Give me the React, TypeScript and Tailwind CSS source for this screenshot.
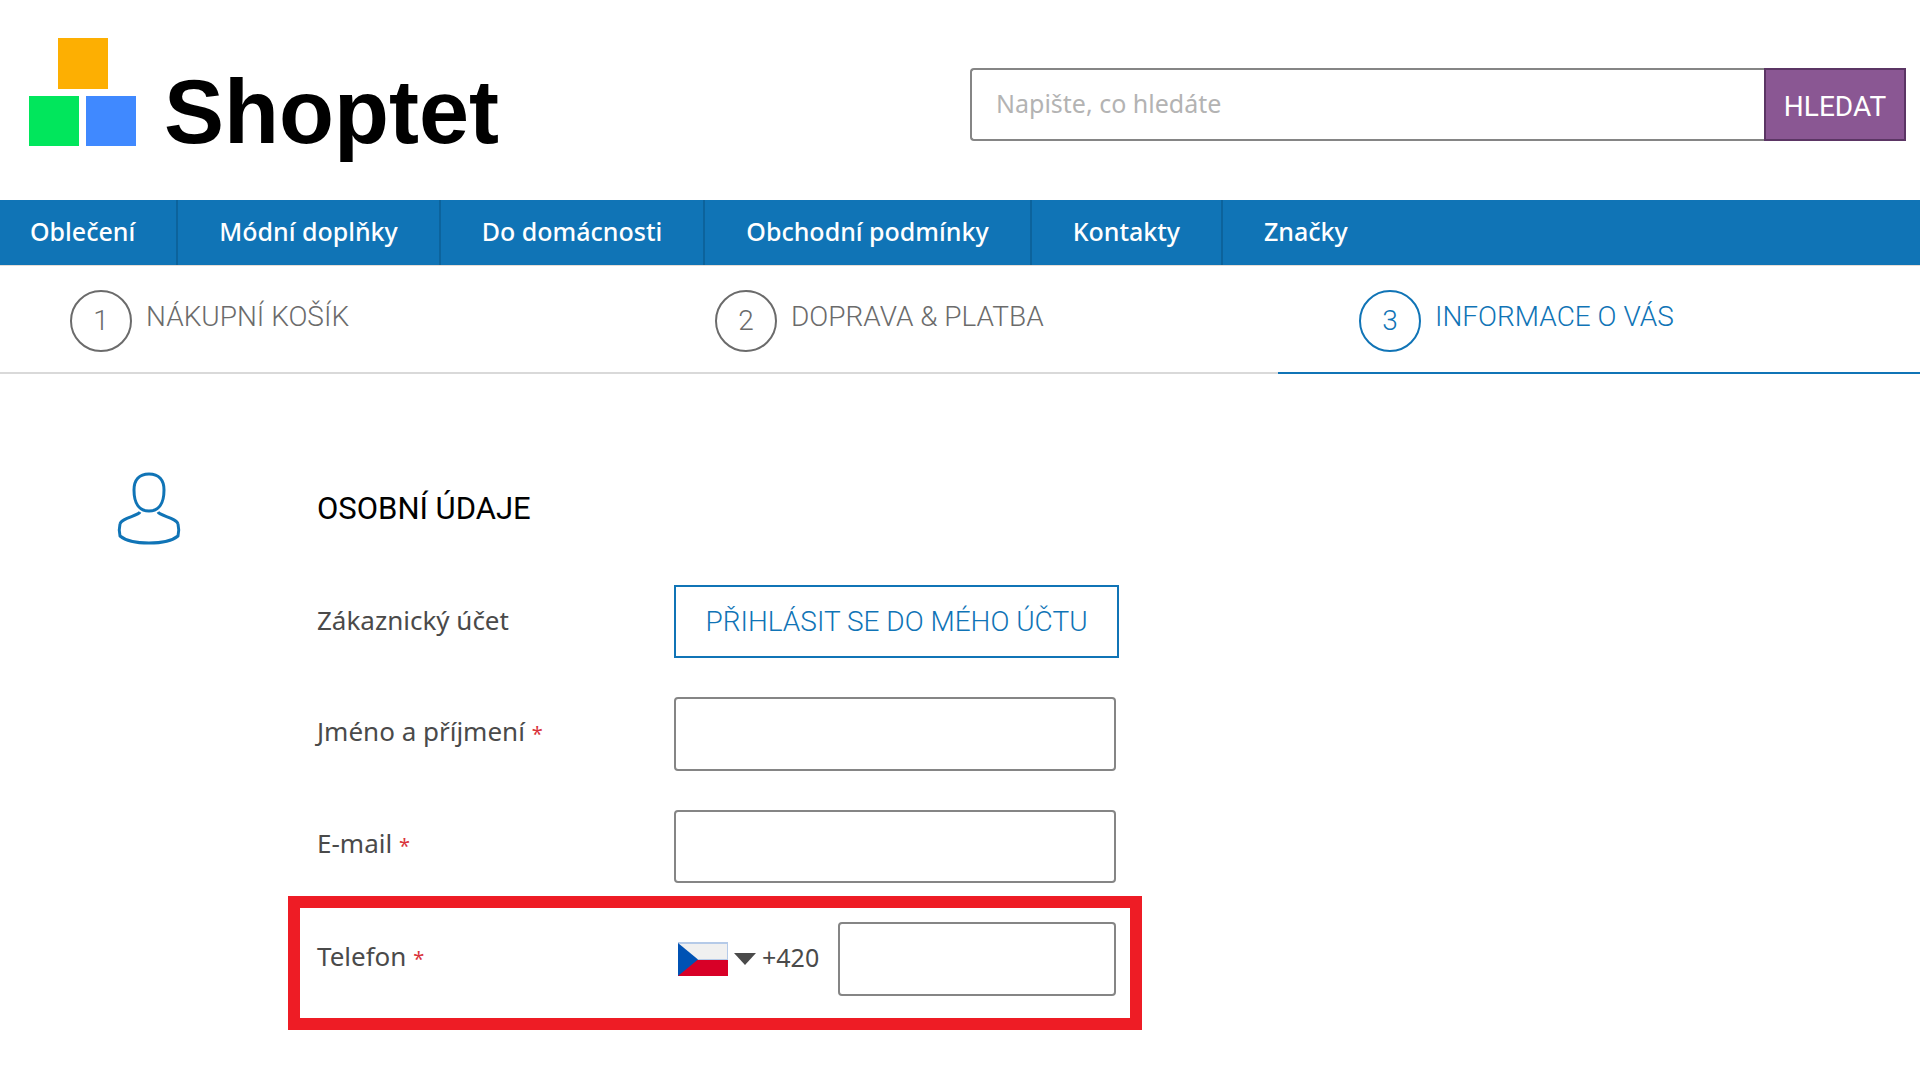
import clsx from 'clsx'

const navItems = [
  { label: 'Oblečení', href: '#obleceni' },
  { label: 'Módní doplňky', href: '#modni-doplnky' },
  { label: 'Do domácnosti', href: '#do-domacnosti' },
  { label: 'Obchodní podmínky', href: '#obchodni-podminky' },
  { label: 'Kontakty', href: '#kontakty' },
  { label: 'Značky', href: '#znacky' },
]

const steps = [
  { label: 'NÁKUPNÍ KOŠÍK', active: false },
  { label: 'DOPRAVA & PLATBA', active: false },
  { label: 'INFORMACE O VÁS', active: true },
]

const inputClass = 'rounded-[4px] border-2 border-[#858585] bg-white px-4 outline-none'

function Logo() {
  return (
    <a href="#" className="flex items-start gap-7">
      <svg width="107" height="108" viewBox="0 0 107 108" aria-hidden="true">
        <rect x="29" y="0" width="50" height="51" fill="#fdaf02" />
        <rect x="0" y="58" width="50" height="50" fill="#01e65c" />
        <rect x="57" y="58" width="50" height="50" fill="#4089ff" />
      </svg>
      <span className="pt-[23px] text-[90px] leading-[102px] font-bold text-black font-['Liberation_Sans',sans-serif]">
        Shoptet
      </span>
    </a>
  )
}

function UserIcon() {
  return (
    <svg
      width="66"
      height="76"
      viewBox="0 0 66 76"
      fill="none"
      stroke="#1074b6"
      strokeWidth="3"
      aria-hidden="true"
    >
      <path d="M33 3C23 3 18 9 18 19C18 32 23 40 33 40C43 40 48 32 48 19C48 9 43 3 33 3Z" />
      <path d="M24 41C22 45 5 47 4 53C3 57 3 61 4 65C10 70 22 72 33 72C44 72 56 70 62 65C63 61 63 57 62 53C61 47 44 45 42 41" />
    </svg>
  )
}

function Flag() {
  return (
    <svg width="50" height="34" viewBox="0 0 50 34" aria-hidden="true">
      <rect width="50" height="34" fill="#b5cae8" />
      <rect y="2" width="49" height="15" fill="#f0f0f0" />
      <rect y="18" width="50" height="16" fill="#d80027" />
      <path d="M0 1L20 17.5L0 34Z" fill="#0052b4" />
    </svg>
  )
}

function FieldLabel({ id, text }: { id: string; text: string }) {
  return (
    <label htmlFor={id} className="w-[357px] shrink-0 pb-1 text-[26px]">
      {text} <span className="text-[20px] text-[#d9333b]">*</span>
    </label>
  )
}

export default function App() {
  return (
    <div className="min-h-screen overflow-x-hidden bg-white text-[25px] leading-[38px] text-[#4a4a4a] font-['Noto_Sans',sans-serif]">
      <header className="flex h-[200px] items-start justify-between pr-[14px] pl-[29px]">
        <div className="pt-[38px]">
          <Logo />
        </div>
        <form className="mt-[68px] flex h-[73px] w-[936px]" onSubmit={(e) => e.preventDefault()}>
          <input
            type="search"
            aria-label="Hledat"
            placeholder="Napište, co hledáte"
            className="min-w-0 grow rounded-l-[4px] border-2 border-r-0 border-[#858585] px-6 pb-1 outline-none placeholder:text-[#b3b3b3]"
          />
          <button
            type="submit"
            className="w-[142px] border-2 border-[#5b3564] bg-[#8a5793] pt-1 text-[28px] text-white font-['Roboto',sans-serif]"
          >
            HLEDAT
          </button>
        </form>
      </header>

      <nav className="flex h-[66px] border-b border-[#e4ddd8] bg-[#1074b6] text-white">
        {navItems.map((item, i) => (
          <a
            key={item.href}
            href={item.href}
            className={clsx(
              'flex items-center pr-[41px] pb-1 font-medium',
              i === 0 ? 'pl-[30px]' : 'pl-[41px]',
              i < navItems.length - 1 && 'border-r-2 border-[#0c639c]'
            )}
          >
            {item.label}
          </a>
        ))}
      </nav>

      <ol className="grid h-[108px] grid-cols-[634fr_644fr_642fr] text-[28px] font-light font-['Roboto',sans-serif]">
        {steps.map((step, i) => (
          <li
            key={step.label}
            className={clsx(
              'flex items-start gap-[14px] border-b-2 pt-6',
              i === 0 ? 'pl-[70px]' : 'pl-[81px]',
              step.active ? 'border-[#1074b6] text-[#1074b6]' : 'border-[#d9d9d9] text-[#6b6b6b]'
            )}
          >
            <span className="flex size-[62px] items-center justify-center rounded-full border-2 border-current">
              {i + 1}
            </span>
            <span className="pt-2">{step.label}</span>
          </li>
        ))}
      </ol>

      <main className="flex pt-[97px] pl-[116px]">
        <UserIcon />
        <form className="pl-[135px]" onSubmit={(e) => e.preventDefault()}>
          <h2 className="pt-[19px] text-[31px] leading-[38px] text-black font-['Roboto',sans-serif]">
            OSOBNÍ ÚDAJE
          </h2>

          <div className="mt-[57px] flex h-[73px] items-center">
            <span className="w-[357px] shrink-0 pb-1 text-[26px]">Zákaznický účet</span>
            <button
              type="button"
              className="h-full w-[445px] border-2 border-[#1074b6] text-[28px] font-light text-[#1074b6] font-['Roboto',sans-serif]"
            >
              PŘIHLÁSIT SE DO MÉHO ÚČTU
            </button>
          </div>

          <div className="mt-[39px] flex h-[74px] items-center">
            <FieldLabel id="name" text="Jméno a příjmení" />
            <input id="name" type="text" className={clsx(inputClass, 'h-full w-[442px]')} />
          </div>

          <div className="mt-[39px] flex h-[73px] items-center">
            <FieldLabel id="email" text="E-mail" />
            <input id="email" type="email" className={clsx(inputClass, 'h-full w-[442px]')} />
          </div>

          <div className="mt-[13px] -ml-[29px] flex w-[854px] items-center border-[12px] border-[#ee1c25] pt-[14px] pr-[14px] pb-[22px] pl-[17px]">
            <FieldLabel id="phone" text="Telefon" />
            <button
              type="button"
              aria-label="Předvolba země"
              className="flex h-[74px] grow items-center gap-[6px] pl-1"
            >
              <Flag />
              <svg width="22" height="12" viewBox="0 0 22 12" aria-hidden="true">
                <path d="M0 0H22L11 12Z" fill="#4a4a4a" />
              </svg>
              <span className="pb-1">+420</span>
            </button>
            <input id="phone" type="tel" className={clsx(inputClass, 'h-[74px] w-[278px]')} />
          </div>
        </form>
      </main>
    </div>
  )
}
